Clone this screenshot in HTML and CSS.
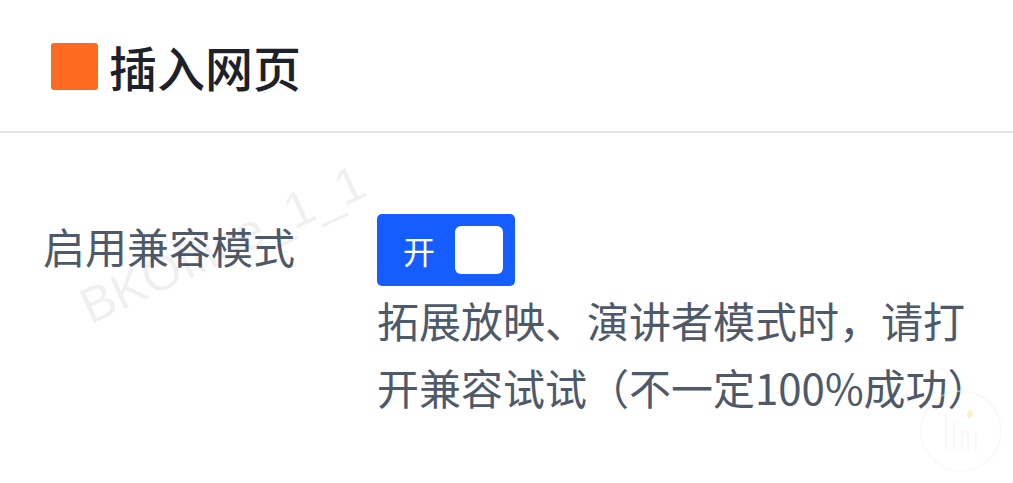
FILE: index.html
```html
<!DOCTYPE html>
<html lang="zh-CN">
<head>
  <meta charset="UTF-8" />
  <meta name="viewport" content="width=device-width, initial-scale=1.0"/>
  <title>插入网页</title>
  <link rel="stylesheet" href="styles.css">
</head>
<body>
  <div class="panel">
    <header class="panel-header">
      <span class="mark"></span>
      <h1>插入网页</h1>
    </header>

    <div class="panel-body">
      <div class="form-item">
        <label class="form-label">启用兼容模式</label>
        <div class="form-control">
          <button class="switch" id="compatSwitch">
            <span class="switch-text">开</span>
            <span class="switch-dot"></span>
          </button>
          <p class="form-help">拓展放映、演讲者模式时，请打开兼容试试（不一定100%成功）</p>
        </div>
      </div>
    </div>

    <div class="watermark wm-1">BKOffice_1_1</div>
    <div class="watermark wm-2">BKOffice_1_1</div>

    <div class="helper-badge">
      <svg width="86" height="86" viewBox="0 0 86 86">
        <circle cx="43" cy="43" r="40" fill="none" stroke="#f3f3f3" stroke-width="1.5"/>
        <path d="M28 62 V26 M36 62 V34 M44 62 V44 H50 V62 M58 62 V46" fill="none" stroke="#f1f1f1" stroke-width="1.5"/>
        <ellipse cx="52" cy="26" rx="3" ry="4" fill="#fbe7a6"/>
      </svg>
    </div>
  </div>
</body>
</html>
```

FILE: styles.css
```css
body {
  margin: 0;
  background: #fff;
  font-family: "Noto Sans CJK SC", "Noto Sans", sans-serif;
  color: #1d2129;
}
.panel {
  position: relative;
  height: 483px;
  overflow: hidden;
}
.panel-header {
  display: flex;
  align-items: center;
  gap: 11px;
  height: 131px;
  padding-left: 51px;
  border-bottom: 2px solid #e5e6eb;
}
.mark {
  width: 47px;
  height: 47px;
  border-radius: 3px;
  background: #ff6a21;
  margin-top: 2px;
}
.panel-header h1 {
  margin: 0;
  font-size: 48px;
  line-height: 48px;
  font-weight: 500;
  color: #1d2129;
}
.panel-body {
  padding: 80px 20px 0 43px;
}
.form-item {
  display: flex;
  align-items: flex-start;
}
.form-label {
  width: 334px;
  flex-shrink: 0;
  font-size: 42px;
  line-height: 66px;
  color: #4e5969;
}
.form-control {
  flex: 1;
  padding-top: 1px;
}
.switch {
  display: flex;
  align-items: center;
  width: 138px;
  height: 72px;
  padding: 0 12px 0 26px;
  border: none;
  border-radius: 5px;
  background: #165dff;
  cursor: pointer;
  box-sizing: border-box;
}
.switch-text {
  font-family: "Noto Sans CJK SC", sans-serif;
  font-size: 32px;
  line-height: 32px;
  color: #fff;
  width: 32px;
}
.switch-dot {
  margin-left: auto;
  width: 48px;
  height: 48px;
  border-radius: 6px;
  background: #fff;
}
.form-help {
  margin: 0;
  font-size: 42px;
  line-height: 67px;
  color: #4e5969;
}
.watermark {
  position: absolute;
  font-family: "Liberation Sans", sans-serif;
  font-size: 50px;
  line-height: 50px;
  color: rgba(0, 0, 0, 0.06);
  transform: rotate(-25deg);
  transform-origin: left bottom;
  white-space: nowrap;
  pointer-events: none;
}
.wm-1 {
  left: 94px;
  top: 282px;
}
.wm-2 {
  left: 670px;
  top: -42px;
}
.helper-badge {
  position: absolute;
  left: 918px;
  top: 388px;
  opacity: 0.55;
}
```
